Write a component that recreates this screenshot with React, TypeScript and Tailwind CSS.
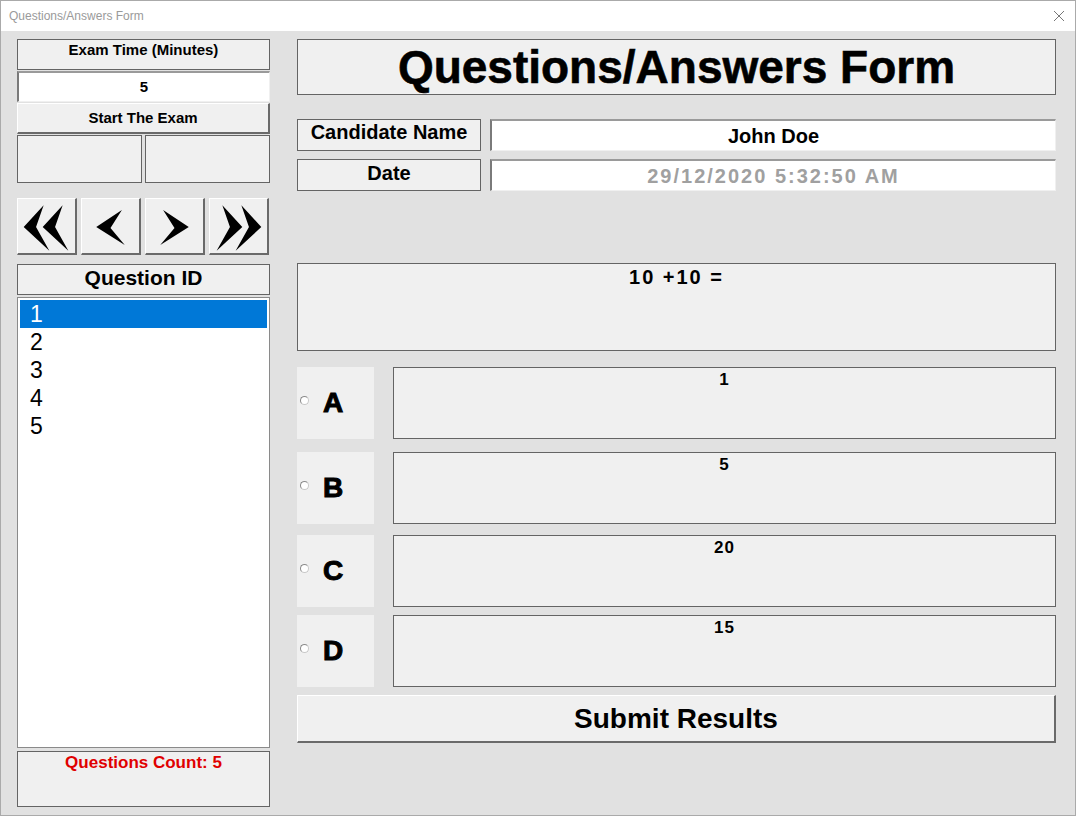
import React from "react";

const FONT = "font-['Liberation_Sans',Arial,sans-serif]";

function NavButton({ points }: { points: string[] }) {
  return (
    <button className="w-[60px] h-[57px] bg-[#f0f0f0] border-t border-l border-b-2 border-r-2 border-t-white border-l-white border-b-[#6a6a6a] border-r-[#6a6a6a] flex items-center justify-center">
      <svg width="60" height="57" viewBox="0 0 60 57">
        {points.map((p) => (
          <polygon key={p} points={p} fill="#000" />
        ))}
      </svg>
    </button>
  );
}

const options = [
  { letter: "A", answer: "1", mt: "mt-[16px]" },
  { letter: "B", answer: "5", mt: "mt-[13px]" },
  { letter: "C", answer: "20", mt: "mt-[11px]" },
  { letter: "D", answer: "15", mt: "mt-[8px]" },
];

export default function App() {
  return (
    <div className={`w-[1076px] h-[816px] bg-[#e1e1e1] border border-[#aaaaaa] flex flex-col overflow-hidden text-black ${FONT}`}>
      {/* Title bar */}
      <div className="h-[30px] bg-white flex items-center justify-between pl-[8px] pr-[10px] shrink-0">
        <span className="text-[12px] text-[#9a9a9a]">Questions/Answers Form</span>
        <svg width="12" height="12" viewBox="0 0 12 12">
          <path d="M1 1 L11 11 M11 1 L1 11" stroke="#777" strokeWidth="1" />
        </svg>
      </div>

      <div className="flex pl-[16px] pt-[8px] gap-[27px]">
        {/* Left column */}
        <div className="w-[253px] flex flex-col">
          <div className="h-[31px] border border-[#646464] bg-[#f0f0f0] flex justify-center text-[15px] leading-[20px] font-bold">
            Exam Time (Minutes)
          </div>
          <div className="mt-[1px] h-[31px] bg-white border-t-2 border-l-2 border-b border-r border-t-[#9a9a9a] border-l-[#7a7a7a] border-b-[#f0f0f0] border-r-[#f0f0f0] flex justify-center items-center text-[15px] font-bold">
            5
          </div>
          <button className="mt-[1px] h-[31px] bg-[#f0f0f0] border-t border-l border-b-2 border-r-2 border-t-white border-l-white border-b-[#6a6a6a] border-r-[#6a6a6a] flex justify-center items-center text-[15px] font-bold">
            Start The Exam
          </button>
          <div className="mt-[1px] grid grid-cols-2 gap-[3px]">
            <div className="h-[48px] border border-[#646464] bg-[#f0f0f0]" />
            <div className="h-[48px] border border-[#646464] bg-[#f0f0f0]" />
          </div>

          <div className="mt-[15px] flex gap-[4px]">
            <NavButton points={["6,29 27,6 19,29 33,54", "26,29 47,6 39,29 53,54"]} />
            <NavButton points={["15,29 42,11 30,30 45,48"]} />
            <NavButton points={["45,29 18,11 30,30 15,48"]} />
            <NavButton points={["54,29 33,6 41,29 27,54", "34,29 13,6 21,29 7,54"]} />
          </div>

          <div className="mt-[9px] h-[31px] border border-[#646464] bg-[#f0f0f0] flex justify-center pt-[1px] text-[21px] leading-[24px] font-bold">
            Question ID
          </div>
          <div className="mt-[2px] h-[451px] bg-white border border-[#8a8a8a] p-[2px] flex flex-col text-[23px]">
            {[1, 2, 3, 4, 5].map((n) => (
              <div
                key={n}
                className={
                  n === 1
                    ? "h-[28px] leading-[28px] pl-[10px] bg-[#0078d7] text-white"
                    : "h-[28px] leading-[28px] pl-[10px]"
                }
              >
                {n}
              </div>
            ))}
          </div>
          <div className="mt-[3px] h-[56px] border border-[#646464] bg-[#f0f0f0] flex justify-center text-[17px] leading-[22px] font-bold text-[#e00000]">
            Questions Count: 5
          </div>
        </div>

        {/* Right column */}
        <div className="w-[759px] flex flex-col">
          <div className="h-[56px] border border-[#646464] bg-[#f0f0f0] flex justify-center items-center text-[46px] font-bold [-webkit-text-stroke:0.6px_black]">
            Questions/Answers Form
          </div>

          <div className="mt-[24px] flex gap-[9px]">
            <div className="w-[184px] h-[32px] border border-[#646464] bg-[#f0f0f0] flex justify-center text-[20px] leading-[24px] font-bold">
              Candidate Name
            </div>
            <div className="flex-1 h-[32px] bg-white border-t-2 border-l-2 border-b border-r border-t-[#9a9a9a] border-l-[#7a7a7a] border-b-[#f0f0f0] border-r-[#f0f0f0] flex justify-center items-center text-[20px] font-bold">
              John Doe
            </div>
          </div>
          <div className="mt-[8px] flex gap-[9px]">
            <div className="w-[184px] h-[32px] border border-[#646464] bg-[#f0f0f0] flex justify-center pt-[1px] text-[20px] leading-[24px] font-bold">
              Date
            </div>
            <div className="flex-1 h-[32px] bg-white border-t-2 border-l-2 border-b border-r border-t-[#9a9a9a] border-l-[#7a7a7a] border-b-[#f0f0f0] border-r-[#f0f0f0] flex justify-center items-center text-[20px] font-bold tracking-[2px] text-[#a0a0a0]">
              29/12/2020 5:32:50 AM
            </div>
          </div>

          <div className="mt-[72px] h-[88px] border border-[#646464] bg-[#f0f0f0] flex justify-center text-[20px] leading-[26px] font-bold tracking-[2px]">
            10 +10 =
          </div>

          {options.map((o) => (
            <div key={o.letter} className={`${o.mt} flex gap-[19px]`}>
              <div className="w-[77px] h-[72px] bg-[#f0f0f0] flex items-center pl-[3px]">
                <span className="w-[9px] h-[9px] rounded-full bg-white border border-[#8a8a8a] border-r-[#c8c8c8] border-b-[#c8c8c8] -mt-[6px]" />
                <span className="ml-[14px] text-[28px] font-bold [-webkit-text-stroke:1px_black]">{o.letter}</span>
              </div>
              <div className="flex-1 h-[72px] border border-[#646464] bg-[#f0f0f0] flex justify-center text-[17px] leading-[24px] font-bold tracking-[1px]">
                {o.answer}
              </div>
            </div>
          ))}

          <button className="mt-[8px] h-[48px] bg-[#f0f0f0] border-t border-l border-b-2 border-r-2 border-t-white border-l-white border-b-[#6a6a6a] border-r-[#6a6a6a] flex justify-center items-center text-[28px] font-bold">
            Submit Results
          </button>
        </div>
      </div>
    </div>
  );
}
